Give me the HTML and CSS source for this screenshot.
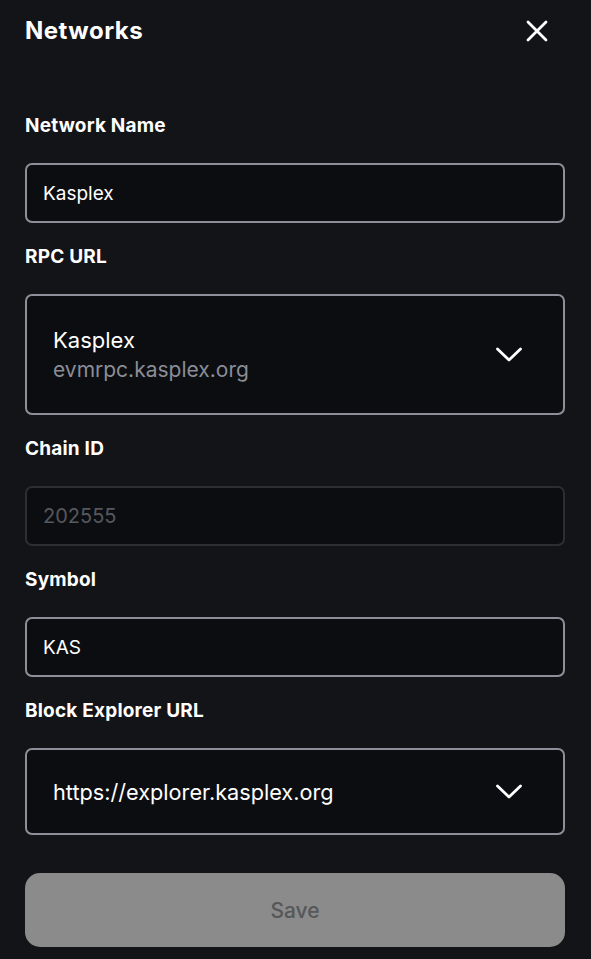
FILE: index.html
```html
<!DOCTYPE html>
<html lang="en">
<head>
  <meta charset="UTF-8">
  <title>Networks</title>
  <meta name="viewport" content="width=device-width,initial-scale=1">
  <link rel="stylesheet" href="styles.css">
</head>
<body>
  <div class="sheet">
    <div class="header">
      <h1>Networks</h1>
      <button class="close" aria-label="Close">
        <svg width="22" height="22" viewBox="0 0 22 22"><path d="M2 2 L20 20 M20 2 L2 20" stroke="#fff" stroke-width="2.8" stroke-linecap="round" fill="none"/></svg>
      </button>
    </div>

    <div class="form">
      <div class="field">
        <label>Network Name</label>
        <div class="input">Kasplex</div>
      </div>

      <div class="field">
        <label>RPC URL</label>
        <div class="select rpc">
          <div class="select-text">
            <div class="opt-name">Kasplex</div>
            <div class="opt-url">evmrpc.kasplex.org</div>
          </div>
          <svg class="chevron" width="28" height="18" viewBox="0 0 28 18"><path d="M2.5 3 L14 14 L25.5 3" stroke="#fff" stroke-width="2.8" stroke-linecap="round" stroke-linejoin="round" fill="none"/></svg>
        </div>
      </div>

      <div class="field">
        <label>Chain ID</label>
        <div class="input disabled">202555</div>
      </div>

      <div class="field">
        <label>Symbol</label>
        <div class="input">KAS</div>
      </div>

      <div class="field">
        <label>Block Explorer URL</label>
        <div class="select explorer">
          <div class="select-text">
            <div class="opt-name">https://explorer.kasplex.org</div>
          </div>
          <svg class="chevron" width="28" height="18" viewBox="0 0 28 18"><path d="M2.5 3 L14 14 L25.5 3" stroke="#fff" stroke-width="2.8" stroke-linecap="round" stroke-linejoin="round" fill="none"/></svg>
        </div>
      </div>
    </div>

    <button class="save" disabled>Save</button>
  </div>
</body>
</html>
```

FILE: styles.css
```css
html, body {
  margin: 0;
  background: #131417;
}
body {
  font-family: Inter, "Noto Sans", sans-serif;
  color: #fff;
}
.sheet {
  padding: 0 26px 0 25px;
}
.header {
  height: 61px;
  display: flex;
  align-items: center;
  justify-content: space-between;
}
h1 {
  margin: 0;
  font-size: 24px;
  line-height: 32px;
  font-weight: 700;
  letter-spacing: 0.5px;
}
.close {
  background: none;
  border: none;
  padding: 0;
  margin-right: 17px;
  width: 22px;
  height: 22px;
  display: flex;
}
.form {
  margin-top: 53px;
  display: flex;
  flex-direction: column;
  gap: 22px;
}
.field {
  display: flex;
  flex-direction: column;
  gap: 25px;
}
label {
  font-size: 19px;
  line-height: 24px;
  font-weight: 700;
  letter-spacing: 0.2px;
}
.input {
  box-sizing: border-box;
  height: 60px;
  display: flex;
  align-items: center;
  padding: 0 16px;
  border: 2.5px solid #8d909b;
  border-radius: 7px;
  background: #0c0d10;
  font-size: 19px;
}
.input.disabled {
  border-color: #2c2e33;
  color: #55585e;
  font-size: 20px;
}
.select {
  box-sizing: border-box;
  display: flex;
  align-items: center;
  justify-content: space-between;
  padding: 0 40px 0 26px;
  border: 2.5px solid #8d909b;
  border-radius: 7px;
  background: #0c0d10;
}
.select.rpc { height: 121px; }
.select.explorer { height: 87px; }
.opt-name {
  font-size: 21.7px;
  line-height: 30px;
}
.rpc .opt-name { font-size: 22px; }
.opt-url {
  font-size: 21px;
  line-height: 30px;
  color: #8a8d96;
}
.chevron { display: block; }
.save {
  display: block;
  width: 100%;
  height: 74px;
  margin-top: 38px;
  border: none;
  border-radius: 15px;
  background: #8a8b8a;
  color: #56575a;
  font-family: Inter, "Noto Sans", sans-serif;
  font-size: 21px;
  font-weight: 500;
}
```
